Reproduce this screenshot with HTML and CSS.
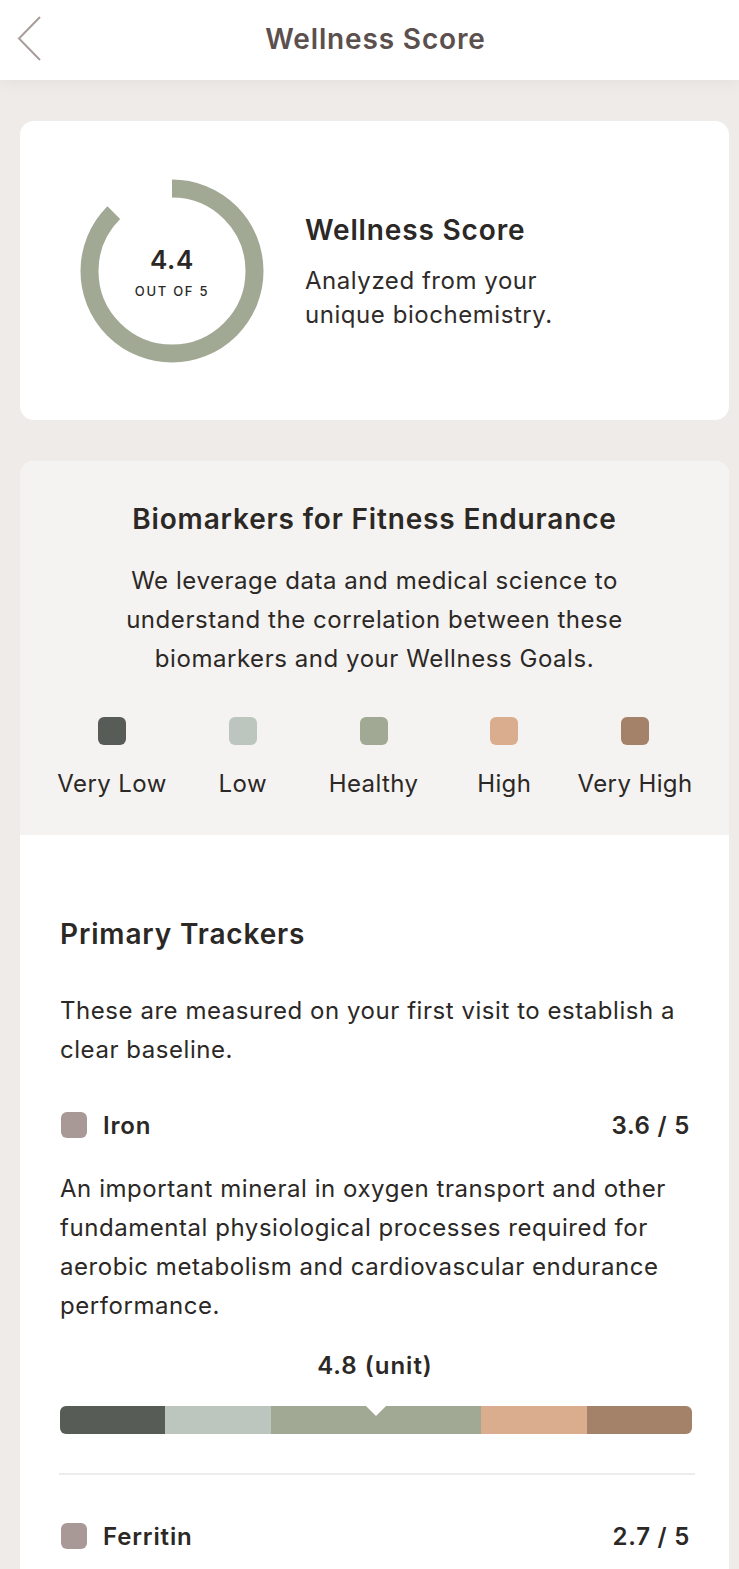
FILE: index.html
```html
<!DOCTYPE html>
<html lang="en">
<head>
<meta charset="utf-8">
<title>Wellness Score</title>
<link rel="stylesheet" href="styles.css">
</head>
<body>
<header class="topbar">
  <button class="back" aria-label="Back">
    <svg width="26" height="46" viewBox="0 0 26 46"><polyline points="23,1 2,22.5 23,44" fill="none" stroke="#a89d9a" stroke-width="2"/></svg>
  </button>
  <h1 class="topbar-title">Wellness Score</h1>
</header>
<main class="page">
  <section class="card score-card">
    <div class="ring">
      <svg width="184" height="184" viewBox="0 0 184 184">
        <circle cx="92" cy="92" r="82.5" fill="none" stroke="#a1a893" stroke-width="18" stroke-dasharray="453 600" transform="rotate(-90 92 92)"/>
      </svg>
      <div class="ring-label">
        <div class="ring-value">4.4</div>
        <div class="ring-out">OUT OF 5</div>
      </div>
    </div>
    <div class="score-text">
      <h2 class="score-title">Wellness Score</h2>
      <p class="score-sub">Analyzed from your unique biochemistry.</p>
    </div>
  </section>

  <section class="card bio-card">
    <div class="bio-intro">
      <h2 class="bio-title">Biomarkers for Fitness Endurance</h2>
      <p class="bio-text">We leverage data and medical science to understand the correlation between these biomarkers and your Wellness Goals.</p>
      <ul class="legend">
        <li class="legend-item"><span class="swatch very-low"></span>Very Low</li>
        <li class="legend-item"><span class="swatch low"></span>Low</li>
        <li class="legend-item"><span class="swatch healthy"></span>Healthy</li>
        <li class="legend-item"><span class="swatch high"></span>High</li>
        <li class="legend-item"><span class="swatch very-high"></span>Very High</li>
      </ul>
    </div>
    <div class="trackers">
      <h3 class="trackers-title">Primary Trackers</h3>
      <p class="trackers-text">These are measured on your first visit to establish a clear baseline.</p>
      <article class="marker">
        <div class="marker-head">
          <span class="marker-dot"></span>
          <span class="marker-name">Iron</span>
          <span class="marker-score">3.6 / 5</span>
        </div>
        <p class="marker-desc">An important mineral in oxygen transport and other fundamental physiological processes required for aerobic metabolism and cardiovascular endurance performance.</p>
        <div class="marker-value">4.8 (unit)</div>
        <div class="range-bar">
          <span class="seg very-low"></span>
          <span class="seg low"></span>
          <span class="seg healthy wide"></span>
          <span class="seg high"></span>
          <span class="seg very-high"></span>
          <span class="notch" style="left:50%"></span>
        </div>
      </article>
      <hr class="divider">
      <article class="marker">
        <div class="marker-head">
          <span class="marker-dot"></span>
          <span class="marker-name">Ferritin</span>
          <span class="marker-score">2.7 / 5</span>
        </div>
      </article>
    </div>
  </section>
</main>
</body>
</html>
```

FILE: styles.css
```css
* { box-sizing: border-box; }
html, body { margin: 0; padding: 0; }
html { overflow: hidden; }
body {
  background: #efebe9;
  font-family: "Inter", "Liberation Sans", sans-serif;
  color: #2b2826;
  width: 739px;
  letter-spacing: 0.55px;
}
.topbar {
  position: relative;
  height: 80px;
  background: #fff;
  display: flex;
  align-items: center;
  justify-content: center;
  box-shadow: 0 2px 14px rgba(120, 100, 95, 0.08);
  z-index: 1;
}
.back {
  position: absolute;
  left: 17px;
  top: 16px;
  border: 0;
  background: none;
  padding: 0;
  width: 26px;
  height: 46px;
}
.back svg { display: block; }
.topbar-title {
  margin: 0 0 2px 12px;
  font-size: 28px;
  font-weight: 600;
  letter-spacing: 0.85px;
  color: #5b504e;
  line-height: 1;
}
.page {
  padding: 41px 10px 0 20px;
  display: flex;
  flex-direction: column;
  gap: 41px;
}
.card {
  background: #fff;
  border-radius: 14px;
  overflow: hidden;
}
.score-card {
  height: 299px;
  display: flex;
  align-items: center;
  padding-left: 60px;
  gap: 41px;
}
.ring {
  position: relative;
  width: 184px;
  height: 184px;
  flex: none;
}
.ring svg { display: block; }
.ring-label {
  position: absolute;
  inset: 0;
  display: flex;
  flex-direction: column;
  align-items: center;
  justify-content: center;
  padding-top: 3px;
}
.ring-value {
  font-size: 26px;
  font-weight: 600;
  line-height: 28px;
  letter-spacing: 0.6px;
}
.ring-out {
  font-size: 13px;
  font-weight: 500;
  letter-spacing: 1.7px;
  line-height: 16px;
  margin-top: 9px;
}
.score-text { width: 290px; padding-top: 3px; }
.score-title {
  margin: 0;
  font-size: 28px;
  font-weight: 600;
  letter-spacing: 0.85px;
  line-height: 34px;
}
.score-sub {
  margin: 17px 0 0;
  font-size: 24px;
  line-height: 34px;
  color: #2f2b2a;
}
.bio-card { border-radius: 14px 14px 0 0; }
.bio-intro {
  background: #f5f3f1;
  padding: 41px 38px 36px;
  text-align: center;
}
.bio-title {
  margin: 0;
  font-size: 28px;
  font-weight: 600;
  letter-spacing: 0.85px;
  line-height: 34px;
}
.bio-text {
  margin: 25px auto 0;
  max-width: 560px;
  font-size: 24px;
  line-height: 39px;
}
.legend {
  list-style: none;
  margin: 39px 0 0;
  padding: 0 2px 0 0;
  display: flex;
  justify-content: space-between;
}
.legend-item {
  width: 108px;
  flex: none;
  display: flex;
  flex-direction: column;
  align-items: center;
  gap: 24px;
  font-size: 24px;
  line-height: 30px;
  letter-spacing: 0.4px;
  white-space: nowrap;
}
.swatch {
  width: 28px;
  height: 28px;
  border-radius: 6px;
}
.very-low { background: #575c57; }
.low { background: #bcc6be; }
.healthy { background: #a1a893; }
.high { background: #d9ad8e; }
.very-high { background: #a48169; }
.trackers {
  padding: 82px 39px 120px 40px;
}
.trackers-title {
  margin: 0;
  font-size: 28px;
  font-weight: 600;
  letter-spacing: 0.85px;
  line-height: 34px;
}
.trackers-text {
  margin: 40px 0 0;
  font-size: 24px;
  line-height: 39px;
}
.marker { margin-top: 41px; }
.marker-head {
  display: flex;
  align-items: center;
  height: 30px;
}
.marker-dot {
  width: 26px;
  height: 26px;
  border-radius: 6px;
  background: #a89896;
  margin: 0 16px 0 1px;
}
.marker-name {
  font-size: 24px;
  font-weight: 600;
  letter-spacing: 0.85px;
  flex: 1;
}
.marker-score {
  font-size: 24px;
  font-weight: 600;
  letter-spacing: 0.75px;
}
.marker-desc {
  margin: 29px 0 0;
  font-size: 24px;
  line-height: 39px;
}
.marker-value {
  margin-top: 26px;
  text-align: center;
  font-size: 24px;
  font-weight: 600;
  letter-spacing: 1px;
  line-height: 30px;
}
.range-bar {
  position: relative;
  margin: 25px -2px 0 0;
  height: 28px;
  border-radius: 6px;
  overflow: hidden;
  display: flex;
}
.seg { flex: 1; }
.seg.wide { flex: 2; }
.notch {
  position: absolute;
  top: 0;
  transform: translateX(-50%);
  width: 0;
  height: 0;
  border-left: 10px solid transparent;
  border-right: 10px solid transparent;
  border-top: 10px solid #fff;
}
.divider {
  margin: 39px -5px 0 -1px;
  border: 0;
  height: 2px;
  background: #eeebeb;
}
.divider + .marker { margin-top: 46px; }
```
